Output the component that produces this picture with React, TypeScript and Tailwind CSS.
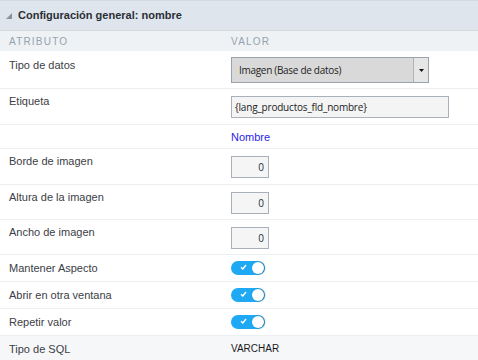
import React from "react";

const Label = ({ children }: { children: React.ReactNode }) => (
  <div className="w-[231px] shrink-0 pl-[9px] text-[11px] leading-[16px] text-[#3b4046]">
    {children}
  </div>
);

const Toggle = () => (
  <div className="relative h-[14px] w-[34px] rounded-full bg-[#1fa9f4]">
    <svg className="absolute left-[9px] top-[3px]" width="7" height="6" viewBox="0 0 7 6">
      <path d="M1 3.2 L2.8 5 L6 1" stroke="white" strokeWidth="1.4" fill="none" />
    </svg>
    <div className="absolute right-[1px] top-[1px] h-[12px] w-[12px] rounded-full bg-white shadow-[1px_0_2px_rgba(0,0,0,0.35)]" />
  </div>
);

const NumInput = () => (
  <div className="flex h-[22px] w-[38px] items-center justify-end border border-[#a9b0ba] bg-[#f5f5f5] pr-[4px] text-[10px] text-[#1c2a3a] [font-family:'Open_Sans',sans-serif]">
    0
  </div>
);

export default function App() {
  return (
    <div className="h-[360px] w-[478px] overflow-hidden bg-white [font-family:'Liberation_Sans',Arial,sans-serif]">
      <div className="flex h-[31px] items-center gap-[6px] border-y border-[#d2d9e1] bg-[#dfe5ed] pl-[6px]">
        <svg width="6" height="6" viewBox="0 0 6 6">
          <polygon points="6,0 6,6 0,6" fill="#8a939c" />
        </svg>
        <span className="text-[11px] font-bold text-[#2a2f35]">Configuración general: nombre</span>
      </div>
      <div className="flex h-[20px] items-center bg-[#eef2f5] text-[10px] tracking-[1.2px] text-[#96a3ae]">
        <div className="w-[231px] pl-[9px]">ATRIBUTO</div>
        <div>VALOR</div>
      </div>

      <div className="flex h-[38px] items-start border-b border-[#eceff2] pt-[6px]">
        <Label>Tipo de datos</Label>
        <div className="flex h-[26px] w-[198px] border border-[#9aa2ac] bg-[#d9d9d9]">
          <div className="flex flex-1 items-center pl-[7px] text-[10px] tracking-[-0.3px] text-[#222] [font-family:'Open_Sans',sans-serif]">
            Imagen (Base de datos)
          </div>
          <div className="flex w-[15px] items-center justify-center border-l border-[#aeb3b9] bg-[#e6e6e6]">
            <svg width="5" height="3" viewBox="0 0 5 3">
              <polygon points="0,0 5,0 2.5,3" fill="#111" />
            </svg>
          </div>
        </div>
      </div>

      <div className="flex h-[36px] items-start border-b border-[#eceff2] pt-[4px]">
        <Label>Etiqueta</Label>
        <div className="mt-[3px] flex h-[22px] w-[218px] items-center border border-[#aab1bb] bg-[#f4f4f4] pl-[3px] text-[10px] tracking-[-0.2px] text-[#222] [font-family:'Open_Sans',sans-serif]">
          {"{lang_productos_fld_nombre}"}
        </div>
      </div>

      <div className="flex h-[24px] items-start border-b border-[#eceff2] pt-[4px]">
        <Label>{""}</Label>
        <div className="text-[11px] leading-[16px] text-[#2a1ee6]">Nombre</div>
      </div>

      {["Borde de imagen", "Altura de la imagen", "Ancho de imagen"].map((t, i) => (
        <div
          key={t}
          className={`flex items-start border-b border-[#eceff2] pt-[4px] ${i === 0 ? "h-[36px]" : "h-[35px]"}`}
        >
          <Label>{t}</Label>
          <div className="mt-[3px]">
            <NumInput />
          </div>
        </div>
      ))}

      {["Mantener Aspecto", "Abrir en otra ventana", "Repetir valor"].map((t) => (
        <div key={t} className="flex h-[27px] items-center border-b border-[#eceff2]">
          <Label>{t}</Label>
          <Toggle />
        </div>
      ))}

      <div className="flex h-[25px] items-center bg-[#f6f7f9]">
        <Label>Tipo de SQL</Label>
        <div className="text-[10px] text-[#1a1a1a]">VARCHAR</div>
      </div>
    </div>
  );
}
